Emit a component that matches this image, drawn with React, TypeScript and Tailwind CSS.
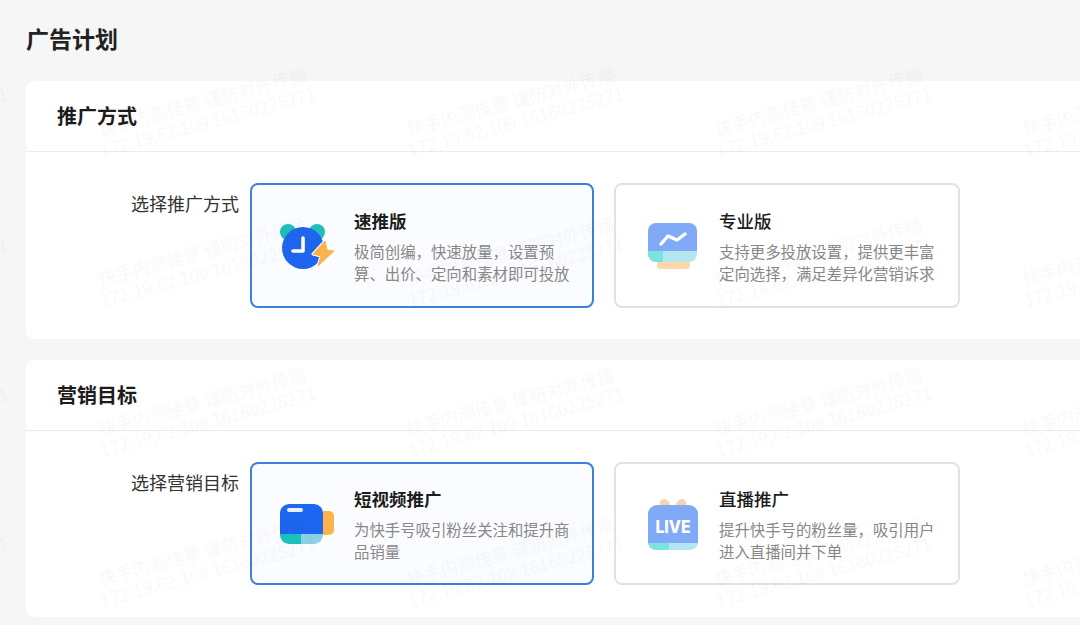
import React from 'react';

const font = { fontFamily: '"Noto Sans CJK SC", sans-serif' };

function SpeedIcon() {
    const bolt = 'M45 18 L33 31 L41 33 L38 43 L54 28 L47 27 Z';
    return (
        <svg width="54" height="46" viewBox="0 0 54 46">
            <circle cx="8" cy="9" r="8" fill="#1dbfb8" />
            <circle cx="37" cy="9" r="8" fill="#1dbfb8" />
            <circle cx="23" cy="25" r="21" fill="#1e66ee" />
            <path d="M23 15v13H13" fill="none" stroke="#fff" strokeWidth="3.6" strokeLinecap="round" strokeLinejoin="round" />
            <path d={bolt} fill="#fff" stroke="#fff" strokeWidth="3" strokeLinejoin="round" />
            <path d={bolt} fill="#fbb24c" stroke="#fbb24c" strokeWidth="1" strokeLinejoin="round" />
        </svg>
    );
}

function ProIcon() {
    return (
        <svg width="49" height="46" viewBox="0 0 49 46">
            <rect x="9" y="38" width="33" height="8" rx="3.5" fill="#fdd7a8" />
            <path d="M8 0h33a8 8 0 0 1 8 8v20H0V8a8 8 0 0 1 8-8z" fill="#80aaf7" />
            <path d="M0 28h49v3a8 8 0 0 1-8 8H8a8 8 0 0 1-8-8z" fill="#b4e6f2" />
            <path d="M0 28h15v11H8a8 8 0 0 1-8-8z" fill="#7ce3e0" />
            <path d="M13 21l7-8 9 4 8-6" fill="none" stroke="#fff" strokeWidth="3.4" strokeLinecap="round" strokeLinejoin="round" />
        </svg>
    );
}

function VideoIcon() {
    return (
        <svg width="54" height="40" viewBox="0 0 54 40">
            <path d="M43 7h6a5 5 0 0 1 5 5v14a5 5 0 0 1-5 5h-6z" fill="#fdb24e" />
            <path d="M9 0h25a9 9 0 0 1 9 9v21H0V9a9 9 0 0 1 9-9z" fill="#1c66f0" />
            <path d="M0 30h21v10H9a9 9 0 0 1-9-9z" fill="#1cc0bc" />
            <path d="M21 30h22v1a9 9 0 0 1-9 9H21z" fill="#8ad0e8" />
            <rect x="7" y="4" width="16" height="4" rx="2" fill="#e8f0ff" />
        </svg>
    );
}

function LiveIcon() {
    return (
        <svg width="50" height="52" viewBox="0 0 50 52">
            <path d="M12 8c-1-4 1-7 4-7 4 0 6 4 6 7z" fill="#fdd2a8" />
            <path d="M38 8c1-4-1-7-4-7-4 0-6 4-6 7z" fill="#fdd2a8" />
            <path d="M9 7h32a9 9 0 0 1 9 9v29H0V16a9 9 0 0 1 9-9z" fill="#80aaf7" />
            <path d="M0 45h21v7H8a8 8 0 0 1-8-7z" fill="#7ce3e0" />
            <path d="M21 45h29a8 8 0 0 1-8 7H21z" fill="#b4e6f2" />
            <text x="25" y="35" textAnchor="middle" fontSize="18" fontWeight="800" fill="#fff" fontFamily="Inter, sans-serif" textLength="35" lengthAdjust="spacingAndGlyphs">LIVE</text>
        </svg>
    );
}

interface OptionProps {
    icon: React.ReactNode;
    title: string;
    desc: string[];
    active?: boolean;
    className: string;
}

function Option({ icon, title, desc, active, className }: OptionProps) {
    return (
        <div className={`rounded-lg flex items-center border-2 ${active ? 'border-[#3d7fdb] bg-[#fbfcff]' : 'border-[#e2e2e2] bg-white'} ${className}`}>
            <div className={`shrink-0 flex ${active ? 'w-[102px] pl-[28px]' : 'w-[103px] pl-[32px]'}`}>{icon}</div>
            <div className="pt-[2px]">
                <div className={`text-[17.5px] leading-6 text-[#1c1c1c] mb-[7px] ${active ? 'font-semibold' : 'font-medium'}`}>{title}</div>
                {desc.map(line => (
                    <div key={line} className="text-[15.4px] leading-[22px] text-[#888] whitespace-nowrap">{line}</div>
                ))}
            </div>
        </div>
    );
}

interface SectionProps {
    title: string;
    label: string;
    children: React.ReactNode;
    className: string;
}

function Section({ title, label, children, className }: SectionProps) {
    return (
        <section className={`ml-[26px] bg-white rounded-l-lg ${className}`}>
            <div className="h-[71px] pl-[31px] flex items-center border-b border-[#ececec]">
                <h2 className="text-[20px] font-semibold text-[#1c1c1c]">{title}</h2>
            </div>
            <div className="pt-[31px] flex">
                <div className="w-[213px] text-right text-[18px] leading-6 pt-[8px] text-[#333]">{label}</div>
                <div className="flex gap-[20px] pl-[11px]">{children}</div>
            </div>
        </section>
    );
}

const marks = [0, 1, 2, 3, 4].flatMap(col => [0, 1, 2, 3].map(row => ({ col, row })));

export default function App() {
    return (
        <div className="relative w-[1080px] h-[625px] overflow-hidden bg-[#f6f6f6]" style={font}>
            <h1 className="pl-[26px] h-[81px] pt-[21px] text-[23px] leading-[34px] font-semibold text-[#222]">广告计划</h1>

            <Section title="推广方式" label="选择推广方式" className="h-[258px]">
                <Option active className="w-[344px] h-[125px]" icon={<SpeedIcon />} title="速推版" desc={['极简创编，快速放量，设置预', '算、出价、定向和素材即可投放']} />
                <Option className="w-[346px] h-[125px]" icon={<ProIcon />} title="专业版" desc={['支持更多投放设置，提供更丰富', '定向选择，满足差异化营销诉求']} />
            </Section>

            <Section title="营销目标" label="选择营销目标" className="h-[257px] mt-[21px]">
                <Option active className="w-[344px] h-[123px]" icon={<VideoIcon />} title="短视频推广" desc={['为快手号吸引粉丝关注和提升商', '品销量']} />
                <Option className="w-[346px] h-[123px]" icon={<LiveIcon />} title="直播推广" desc={['提升快手号的粉丝量，吸引用户', '进入直播间并下单']} />
            </Section>

            {/* watermark */}
            <div className="absolute inset-0 pointer-events-none overflow-hidden">
                {marks.map(m => (
                    <div
                        key={`${m.col}-${m.row}`}
                        className="absolute w-[240px] text-center text-[17.5px] leading-[21px] text-black/[0.03] blur-[0.5px] -rotate-[15deg] whitespace-nowrap"
                        style={{ left: m.col * 308 - 223, top: 90 + m.row * 150 }}
                    >
                        <div>快手内测佳景 谨防对外传播</div>
                        <div>172.19.62.109 16160225271</div>
                    </div>
                ))}
            </div>
        </div>
    );
}
